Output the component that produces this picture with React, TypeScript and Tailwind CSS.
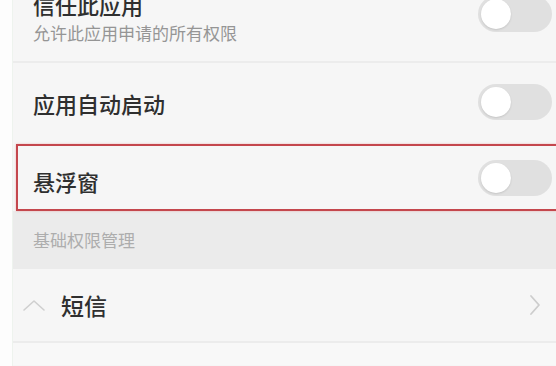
import React from "react";

function Toggle() {
  return (
    <div className="relative h-[36px] w-[74px] shrink-0 rounded-full bg-[#e0e0e0]">
      <div className="absolute left-[3px] top-[3px] h-[30px] w-[30px] rounded-full bg-white shadow-[0_1px_2px_rgba(0,0,0,0.12)]" />
    </div>
  );
}

function Divider() {
  return <div className="h-[2px] bg-[#ececec]" />;
}

export default function App() {
  return (
    <div
      className="flex h-[366px] w-[556px] overflow-hidden bg-white"
      style={{ fontFamily: "'Noto Sans CJK SC', 'Noto Sans', sans-serif" }}
    >
      {/* left margin strip */}
      <div className="w-[13px] shrink-0 border-r border-[#eef3ee] bg-[#fdfdfd]" />

      <div className="flex min-w-0 flex-1 flex-col bg-[#f6f6f6]">
        {/* trust this app */}
        <div className="-mt-[28px] flex h-[89px] shrink-0 items-center justify-between pl-[20px] pr-[4px]">
          <div className="flex flex-col">
            <span className="text-[22px] font-medium leading-[30px] text-[#2f2f2f]">信任此应用</span>
            <span className="mt-[2px] text-[17px] leading-[24px] text-[#959595]">允许此应用申请的所有权限</span>
          </div>
          <div className="-mt-[6px]">
            <Toggle />
          </div>
        </div>
        <Divider />

        {/* auto start */}
        <div className="flex h-[81px] shrink-0 items-center justify-between pl-[20px] pr-[4px]">
          <span className="text-[22px] font-medium text-[#2f2f2f]">应用自动启动</span>
          <div className="-mt-[4px]">
            <Toggle />
          </div>
        </div>

        {/* floating window, highlighted */}
        <div className="relative flex h-[67px] shrink-0 items-center justify-between pl-[20px] pr-[4px]">
          <span className="mt-[8px] text-[22px] font-medium text-[#2f2f2f]">悬浮窗</span>
          <Toggle />
          <div className="pointer-events-none absolute inset-y-0 left-[3px] -right-[10px] border-2 border-[#c4474d] shadow-[0_0_2px_rgba(230,120,120,0.5)]" />
        </div>

        {/* section header */}
        <div className="flex h-[58px] shrink-0 items-center bg-[#ebebeb] pl-[20px]">
          <span className="text-[17px] text-[#adadad]">基础权限管理</span>
        </div>

        {/* sms */}
        <div className="flex h-[72px] shrink-0 items-center justify-between pl-[9px] pr-[14px]">
          <div className="flex items-center">
            <svg width="24" height="16" viewBox="0 0 24 16" fill="none">
              <path d="M2 13 L12 4 L22 13" stroke="#cfcfcf" strokeWidth="1.6" strokeLinecap="round" strokeLinejoin="round" />
            </svg>
            <span className="ml-[15px] text-[23px] font-medium text-[#2f2f2f]">短信</span>
          </div>
          <svg width="14" height="22" viewBox="0 0 14 22" fill="none">
            <path d="M3 2 L11 11 L3 20" stroke="#cdcdcd" strokeWidth="1.8" strokeLinecap="round" strokeLinejoin="round" />
          </svg>
        </div>
        <Divider />

        <div className="h-[22px] shrink-0 bg-[#f8f8f8]" />
      </div>
    </div>
  );
}
